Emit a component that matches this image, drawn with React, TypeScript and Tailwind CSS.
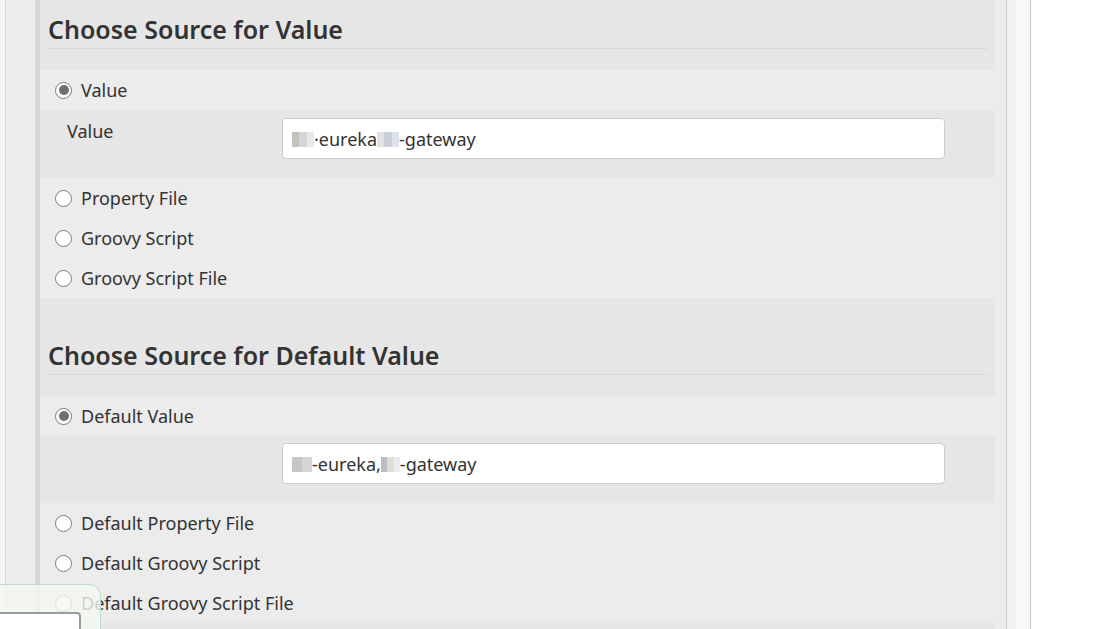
import React from "react";

const font = { fontFamily: '"Noto Sans", "Open Sans", sans-serif' };

function Radio({ checked }: { checked?: boolean }) {
  return (
    <span className="flex h-[17px] w-[17px] shrink-0 items-center justify-center rounded-full border border-[#7a7a7a] bg-white">
      {checked && <span className="h-[10px] w-[10px] rounded-full bg-[#707070]" />}
    </span>
  );
}

function RadioRow({ label, checked }: { label: string; checked?: boolean }) {
  return (
    <div className="flex h-[40px] items-center gap-[9px] pl-[15px]">
      <Radio checked={checked} />
      <span className="text-[18px] text-[#333]">{label}</span>
    </div>
  );
}

function Mosaic({ cells, w }: { cells: string[]; w: string }) {
  return (
    <span className={`inline-flex h-[15px] items-center ${w}`}>
      {cells.map((c, i) => (
        <span key={i} className="h-[15px] flex-1" style={{ background: c }} />
      ))}
    </span>
  );
}

function Field({ children }: { children: React.ReactNode }) {
  return (
    <div className="flex h-[41px] w-[663px] items-center rounded-[4px] border border-[#cccccc] bg-white pl-[9px] pt-[1px] text-[18px] text-[#333]">
      {children}
    </div>
  );
}

function Header({ title, top }: { title: string; top: string }) {
  return (
    <div className={`bg-[#e6e6e6] pl-[8px] pr-[7px] ${top}`}>
      <h2 className="border-b border-[#dadada] text-[25px] font-semibold leading-[37px] text-[#333]">
        {title}
      </h2>
      <div className="h-[21px]" />
    </div>
  );
}

export default function App() {
  return (
    <div className="relative flex h-[629px] w-[1106px] overflow-hidden bg-white" style={font}>
      <div className="w-[5px] bg-[#f4f4f4]" />
      <div className="w-px bg-[#d6d6d6]" />
      <div className="w-[1000px] bg-[#ececec] pl-[29px] pr-[11px]">
        <div className="border-l-[5px] border-[#d6d6d6]">
          <Header title="Choose Source for Value" top="pt-[11px]" />
          <div className="bg-[#ececec]">
            <RadioRow label="Value" checked />
          </div>
          <div className="flex h-[68px] bg-[#e6e6e6] pt-[8px]">
            <div className="w-[242px] pl-[27px] text-[18px] text-[#333]">Value</div>
            <Field>
              <Mosaic w="w-[22px]" cells={["#c4c0bc", "#d2d6da", "#e8e8e8"]} />
              <span>·eureka</span>
              <Mosaic w="w-[22px]" cells={["#e2e2e2", "#c9d0d8", "#dfe3e8"]} />
              <span>-gateway</span>
            </Field>
          </div>
          <div className="bg-[#ececec]">
            <RadioRow label="Property File" />
            <RadioRow label="Groovy Script" />
            <RadioRow label="Groovy Script File" />
          </div>
          <Header title="Choose Source for Default Value" top="pt-[39px]" />
          <div className="bg-[#ececec]">
            <RadioRow label="Default Value" checked />
          </div>
          <div className="flex h-[67px] bg-[#e6e6e6] pt-[7px]">
            <div className="w-[242px]" />
            <Field>
              <Mosaic w="w-[20px]" cells={["#c6c6c6", "#d8d6d4"]} />
              <span>-eureka,</span>
              <Mosaic w="w-[19px]" cells={["#b8bec4", "#e0dcd8", "#ebebeb"]} />
              <span>-gateway</span>
            </Field>
          </div>
          <div className="bg-[#ececec]">
            <RadioRow label="Default Property File" />
            <RadioRow label="Default Groovy Script" />
            <RadioRow label="Default Groovy Script File" />
          </div>
          <div className="h-[20px] bg-[#e6e6e6]" />
        </div>
      </div>
      <div className="w-px bg-[#cfcfcf]" />
      <div className="w-[9px] bg-[#f2f2f2]" />
      <div className="w-[14px] bg-[#f8f8f8]" />
      <div className="w-px bg-[#c8c8c8]" />
      <div className="flex-1 bg-white" />

      <div className="absolute left-0 top-[584px] h-[60px] w-[101px] rounded-tr-[12px] border border-l-0 border-[#bfdcc8] bg-[#f5f8f3]/80">
        <div className="absolute left-0 top-[27px] h-[40px] w-[81px] rounded-tr-[4px] border-2 border-l-0 border-[#959da3] bg-white" />
      </div>
    </div>
  );
}
